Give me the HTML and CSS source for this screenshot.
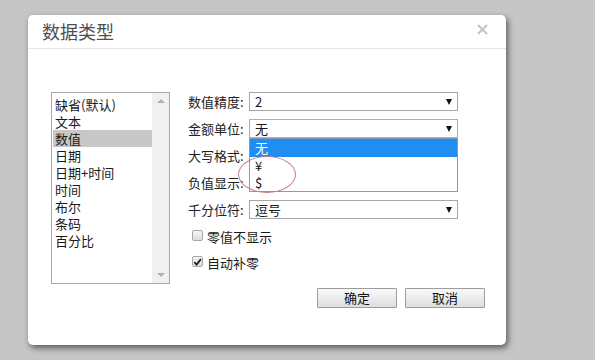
FILE: index.html
```html
<!DOCTYPE html>
<html lang="zh">
<head>
<meta charset="utf-8">
<title>数据类型</title>
<link rel="stylesheet" href="styles.css">
</head>
<body>
<div class="dialog">
  <div class="header">
    <span class="title">数据类型</span>
    <svg class="close" width="11" height="11" viewBox="0 0 11 11"><path d="M1 1L10 10M10 1L1 10" stroke="#c4c4c4" stroke-width="2" fill="none"/></svg>
  </div>
  <div class="body">
    <div class="listbox">
      <ul class="items">
        <li>缺省(默认)</li>
        <li>文本</li>
        <li class="sel">数值</li>
        <li>日期</li>
        <li>日期+时间</li>
        <li>时间</li>
        <li>布尔</li>
        <li>条码</li>
        <li>百分比</li>
      </ul>
      <div class="scrollbar">
        <span class="sarrow up"></span>
        <span class="sarrow down"></span>
      </div>
    </div>
    <div class="form">
      <div class="row"><span class="label">数值精度:</span><div class="select"><span class="val">2</span><span class="arrow"></span></div></div>
      <div class="row"><span class="label">金额单位:</span>
        <div class="select focus"><span class="val">无</span><span class="arrow"></span>
          <ul class="dropdown">
            <li class="hl">无</li>
            <li>¥</li>
            <li>$</li>
          </ul>
        </div>
      </div>
      <div class="row"><span class="label">大写格式:</span><div class="select"><span class="val"></span><span class="arrow"></span></div></div>
      <div class="row"><span class="label">负值显示:</span><div class="select"><span class="val"></span><span class="arrow"></span></div></div>
      <div class="row"><span class="label">千分位符:</span><div class="select"><span class="val">逗号</span><span class="arrow"></span></div></div>
      <label class="check first"><span class="box"></span><span>零值不显示</span></label>
      <label class="check"><span class="box"><svg width="10" height="10" viewBox="0 0 10 10"><path d="M1.5 5.2L4 7.8L8.8 1.8" stroke="#222" stroke-width="2" fill="none"/></svg></span><span>自动补零</span></label>
      <div class="buttons">
        <button class="btn">确定</button>
        <button class="btn">取消</button>
      </div>
    </div>
  </div>
  <div class="mark"></div>
</div>
</body>
</html>
```
FILE: styles.css
```css
* { box-sizing: border-box; }
html, body { margin: 0; padding: 0; }
body {
  background: #c6c6c6;
  width: 595px;
  height: 360px;
  overflow: hidden;
  font-family: "Noto Sans CJK SC", "Liberation Sans", sans-serif;
  font-size: 13px;
  color: #1a1a1a;
}
.dialog {
  position: relative;
  margin: 15px 0 0 28px;
  width: 478px;
  height: 330px;
  background: #fff;
  border-radius: 5px;
  box-shadow: 2px 3px 6px rgba(0,0,0,0.55);
}
.header {
  height: 34px;
  border-bottom: 1px solid #e6e6e6;
  display: flex;
  align-items: center;
  justify-content: space-between;
  padding: 0 18px 2px 14px;
}
.title {
  font-size: 18px;
  color: #505050;
  line-height: 20px;
}
.close { margin-top: -3px; }
.body {
  display: flex;
  padding: 43px 0 0 23px;
}
.listbox {
  width: 119px;
  height: 192px;
  border: 1px solid #a8a8a8;
  display: flex;
}
.items {
  list-style: none;
  margin: 0;
  padding: 3px 0 0 1px;
  flex: 1;
}
.items li {
  height: 17px;
  line-height: 17px;
  padding-left: 2px;
  white-space: nowrap;
}
.items li.sel { background: #c8c8c8; }
.scrollbar {
  width: 17px;
  background: #f0f0f0;
  display: flex;
  flex-direction: column;
  justify-content: space-between;
  align-items: center;
  padding: 6px 0 6px;
}
.sarrow {
  width: 0; height: 0;
  border-left: 4px solid transparent;
  border-right: 4px solid transparent;
}
.sarrow.up { border-bottom: 4px solid #b0b0b0; }
.sarrow.down { border-top: 4px solid #b0b0b0; }
.form {
  margin-left: 18px;
  width: 297px;
  display: flex;
  flex-direction: column;
}
.row {
  display: flex;
  align-items: center;
  height: 19px;
  margin-bottom: 8px;
}
.label {
  width: 61px;
  color: #222;
  white-space: nowrap;
}
.select {
  position: relative;
  width: 209px;
  height: 19px;
  border: 1px solid #a6a6a6;
  display: flex;
  align-items: center;
  justify-content: space-between;
  padding: 0 5px 0 5px;
  background: #fff;
}
.select.focus { border-color: #8fb4e0; }
.val { line-height: 17px; }
.arrow {
  width: 0; height: 0;
  border-left: 3.5px solid transparent;
  border-right: 3.5px solid transparent;
  border-top: 6px solid #111;
}
.dropdown {
  position: absolute;
  top: 18px;
  left: -1px;
  width: 209px;
  margin: 0;
  padding: 0;
  list-style: none;
  border: 1px solid #7f9bbd;
  background: #fff;
  z-index: 2;
}
.dropdown li {
  height: 17px;
  line-height: 17px;
  padding-left: 5px;
}
.dropdown li.hl {
  height: 18px;
  background: #1f8ef0;
  color: #fff;
}
.check {
  display: flex;
  align-items: center;
  height: 17px;
  padding-left: 4px;
  margin-top: 1px;
}
.check.first { margin-top: 1px; margin-bottom: 8px; }
.box {
  width: 11px;
  height: 11px;
  border: 1px solid #a8a8a8;
  border-radius: 2px;
  background: linear-gradient(#f4f4f4, #dcdcdc);
  margin-right: 4px;
  margin-top: -2px;
  display: flex;
  align-items: center;
  justify-content: center;
}
.buttons {
  display: flex;
  justify-content: flex-end;
  gap: 8px;
  margin-top: 17px;
}
.btn {
  width: 80px;
  height: 20px;
  border: 1px solid #9c9c9c;
  border-radius: 1px;
  background: linear-gradient(#fafafa, #dedede);
  font-family: "Noto Sans CJK SC", "Liberation Sans", sans-serif;
  font-size: 13px;
  color: #111;
  padding: 0;
  line-height: 18px;
}
.mark {
  position: absolute;
  left: 210px;
  top: 141px;
  width: 58px;
  height: 37px;
  border: 1px solid #c87a85;
  border-radius: 50%;
  z-index: 3;
  pointer-events: none;
}
```
